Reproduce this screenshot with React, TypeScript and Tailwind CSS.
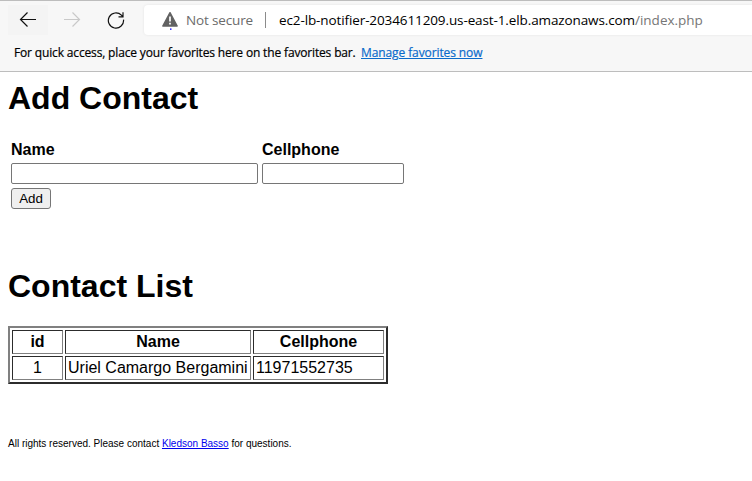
import React from "react";

const sans = "font-['Open_Sans','Noto_Sans',sans-serif]";
const cell =
  "flex h-6 items-center border border-t-[#2c2c2c] border-l-[#2c2c2c] border-r-[#808080] border-b-[#808080] whitespace-nowrap leading-[18px]";

function Toolbar() {
  return (
    <div className="flex h-[35px] items-start pt-[2px] pl-2">
      <div className="mt-[2px] flex h-[30px] w-10 items-center justify-center bg-[#f4f4f4]">
        <svg width="18" height="18" viewBox="0 0 18 18" fill="none" stroke="#111" strokeWidth="1.2">
          <path d="M17 8.5H1.5M8.5 1.5L1.5 8.5L8.5 15.5" />
        </svg>
      </div>
      <div className="mt-[2px] ml-1 flex h-[30px] w-10 items-center justify-center">
        <svg width="18" height="18" viewBox="0 0 18 18" fill="none" stroke="#c9c9c9" strokeWidth="1.2">
          <path d="M1 8.5H16.5M9.5 1.5L16.5 8.5L9.5 15.5" />
        </svg>
      </div>
      <div className="mt-[2px] ml-1 flex h-[30px] w-10 items-center justify-center">
        <svg width="18" height="18" viewBox="0 0 18 18" fill="none" stroke="#111" strokeWidth="1.2">
          <path d="M16.5 8.6A7.6 7.6 0 1 1 14.4 4.2L15.9 5.7M16 1.3V5.8H11.5" />
        </svg>
      </div>
      <div className="mt-[2px] ml-2 flex h-[30px] grow items-center rounded-l-[4px] bg-white pl-[18px] text-[13.5px] leading-[18px] whitespace-nowrap shadow-[0_0_3px_rgba(0,0,0,0.08)]">
        <svg width="16" height="19" viewBox="0 0 16 19" className="mt-px">
          <path d="M8 1.7L15.2 15H.8Z" fill="#626262" stroke="#626262" strokeWidth="1.4" strokeLinejoin="round" />
          <path d="M8 5.5V10.5M8 11.8V13.6" stroke="#fff" strokeWidth="1.7" />
          <rect x="8" y="17.4" width="1.5" height="1.5" fill="#2a20ff" />
        </svg>
        <span className="ml-2 w-[79px] tracking-[-0.15px] text-[#6b6b6b]">Not secure</span>
        <span className="h-4 w-px bg-[#8b8b8b]" />
        <span className="ml-[13px] tracking-[-0.11px] text-black">ec2-lb-notifier-2034611209.us-east-1.elb.amazonaws.com</span>
        <span className="text-[#767676]">/index.php</span>
      </div>
    </div>
  );
}

export default function App() {
  return (
    <div className="h-[481px] w-[752px] overflow-hidden bg-white font-['Liberation_Sans',Arial,sans-serif] text-base text-black">
      <header className={`h-[72px] border-t border-b border-[#bdbdbd] bg-[#f7f7f7] ${sans}`}>
        <Toolbar />
        <div className="flex h-[34px] items-center pl-[14px] text-[12px] leading-4 whitespace-nowrap [-webkit-text-stroke:0.2px]">
          <span className="w-[347px] tracking-[-0.155px]">For quick access, place your favorites here on the favorites bar.</span>
          <a className="tracking-[-0.1px] text-[#0b6bcb] underline">Manage favorites now</a>
        </div>
      </header>
      <main className="px-2">
        <h1 className="mt-2 text-[32px] leading-9 font-bold">Add Contact</h1>
        <form className="mt-[23px] ml-[3px] grid w-max grid-cols-[247px_142px] gap-x-1">
          <label className="h-[24px] leading-[22px] font-bold">Name</label>
          <label className="h-[24px] leading-[22px] font-bold">Cellphone</label>
          <input className="h-[21px] rounded-[2px] border border-[#767676]" />
          <input className="h-[21px] rounded-[2px] border border-[#767676]" />
          <button type="button" className="mt-1 h-[21px] w-10 rounded-[3px] border border-[#767676] bg-[#efefef] text-[13.33px] leading-[17px]">
            Add
          </button>
        </form>
        <h1 className="mt-[59px] text-[32px] leading-9 font-bold">Contact List</h1>
        <div className="mt-[22px] grid h-[58px] w-[380px] grid-cols-[51px_186px_131px] gap-[2px] border-2 border-t-[#808080] border-r-[#2c2c2c] border-b-[#2c2c2c] border-l-[#808080] p-[2px]">
          <div className={`${cell} justify-center font-bold`}>id</div>
          <div className={`${cell} justify-center font-bold`}>Name</div>
          <div className={`${cell} justify-center font-bold`}>Cellphone</div>
          <div className={`${cell} justify-center`}>1</div>
          <div className={`${cell} pl-[2px]`}>Uriel Camargo Bergamini</div>
          <div className={`${cell} pl-[2px]`}>11971552735</div>
        </div>
        <p className="mt-[54px] text-[10px] leading-3 whitespace-nowrap">
          All rights reserved. Please contact <a className="text-[#0000ee] underline">Kledson Basso</a> for questions.
        </p>
      </main>
    </div>
  );
}
